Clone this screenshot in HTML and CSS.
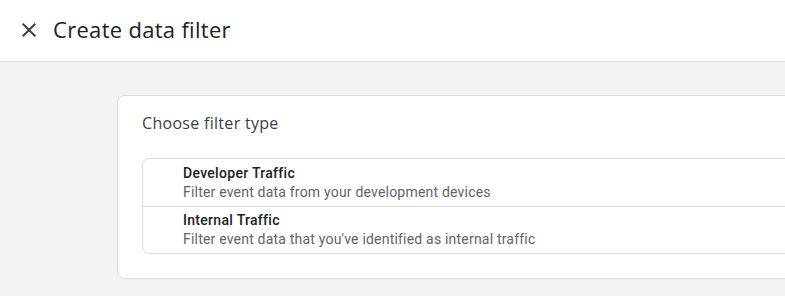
FILE: index.html
```html
<!DOCTYPE html>
<html>
<head>
<meta charset="utf-8">
<link rel="stylesheet" href="styles.css">
</head>
<body>
<header class="topbar">
  <svg class="close" viewBox="0 0 24 24" width="24" height="24"><path d="M19 6.41 17.59 5 12 10.59 6.41 5 5 6.41 10.59 12 5 17.59 6.41 19 12 13.41 17.59 19 19 17.59 13.41 12z" fill="#3c4043"/></svg>
  <h1 class="title">Create data filter</h1>
</header>
<main class="content">
  <section class="card">
    <h2 class="card-title">Choose filter type</h2>
    <ul class="list">
      <li class="item">
        <div class="item-name">Developer Traffic</div>
        <div class="item-desc">Filter event data from your development devices</div>
      </li>
      <li class="item">
        <div class="item-name">Internal Traffic</div>
        <div class="item-desc">Filter event data that you've identified as internal traffic</div>
      </li>
    </ul>
  </section>
</main>
</body>
</html>
```
FILE: styles.css
```css
html, body {
  margin: 0;
  padding: 0;
  height: 100%;
  overflow: hidden;
}
body {
  background: #f1f3f4;
  font-family: Roboto, "Liberation Sans", sans-serif;
}
.topbar {
  height: 61px;
  background: #fff;
  border-bottom: 1px solid #dadce0;
  display: flex;
  align-items: center;
  padding-left: 17px;
}
.close {
  display: block;
  margin-top: -1px;
}
.title {
  margin: -3px 0 0 12px;
  font-family: "Open Sans", sans-serif;
  font-size: 22px;
  font-weight: 400;
  letter-spacing: 0.3px;
  color: #202124;
  line-height: 30px;
}
.content {
  padding: 33px 0 0 117px;
}
.card {
  width: 900px;
  background: #fff;
  border: 1px solid #dadce0;
  border-radius: 8px;
  padding: 16px 24px 24px 24px;
  box-sizing: border-box;
}
.card-title {
  margin: 0 0 24px 0;
  font-family: "Open Sans", sans-serif;
  font-size: 16px;
  font-weight: 400;
  letter-spacing: 0.3px;
  color: #3c4043;
  line-height: 22px;
}
.list {
  list-style: none;
  margin: 0;
  padding: 0;
  border: 1px solid #dadce0;
  border-radius: 8px;
}
.item {
  padding: 4px 0 4px 40px;
  height: 47px;
  box-sizing: border-box;
}
.item + .item {
  border-top: 1px solid #dadce0;
  padding-top: 3px;
}
.item-name {
  font-size: 14px;
  font-weight: 500;
  letter-spacing: 0.3px;
  color: #202124;
  line-height: 20px;
}
.item-desc {
  font-size: 14px;
  color: #5f6368;
  letter-spacing: 0.2px;
  line-height: 19px;
}
```
